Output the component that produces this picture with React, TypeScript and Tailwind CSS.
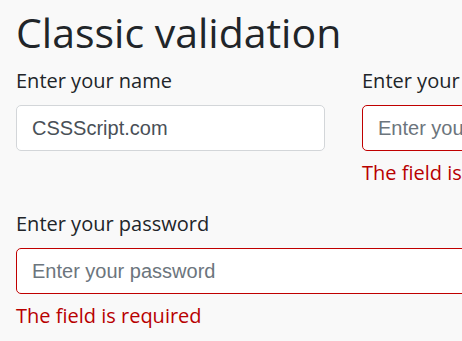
import React from 'react';

const Field: React.FC<{ label: string; placeholder: string; value?: string; invalid?: boolean; wide?: boolean }> = ({
  label,
  placeholder,
  value,
  invalid,
  wide,
}) => (
  <div className={wide ? 'w-[700px]' : 'w-[309px]'}>
    <label className="block text-[20px] leading-[27px] text-[#212529] mb-[11px]">{label}</label>
    <input
      type="text"
      defaultValue={value}
      placeholder={placeholder}
      className={`block w-full h-[46px] px-[15px] rounded-[5px] bg-white text-[20px] text-[#495057] placeholder:text-[#6c757d] outline-none font-['Liberation_Sans',Arial,sans-serif] border ${
        invalid ? 'border-[#c00000]' : 'border-[#d3d6d9]'
      }`}
    />
    {invalid && <p className="mt-[8px] text-[20px] leading-[27px] text-[#b80000]">The field is required</p>}
  </div>
);

export default function App() {
  return (
    <div className="min-h-screen w-[462px] overflow-hidden bg-[#f9f9f9] font-['Open_Sans',sans-serif]">
      <div className="w-[900px] px-4 pt-[1px]">
        <h1 className="text-[41px] leading-[50px] text-[#212529] mt-[6px] mb-[10px]">Classic validation</h1>
        <div className="flex gap-[37px]">
          <Field label="Enter your name" placeholder="Enter your name" value="CSSScript.com" />
          <Field label="Enter your email" placeholder="Enter your email" invalid />
        </div>
        <div className="mt-[24px]">
          <Field label="Enter your password" placeholder="Enter your password" invalid wide />
        </div>
      </div>
    </div>
  );
}
